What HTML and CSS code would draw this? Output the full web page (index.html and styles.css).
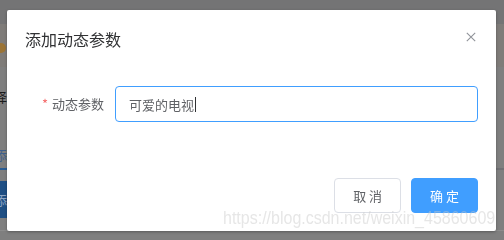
FILE: index.html
```html
<!DOCTYPE html>
<html lang="zh-CN">
<head>
<meta charset="utf-8">
<title>添加动态参数</title>
<link rel="stylesheet" href="styles.css">
</head>
<body>
<div class="page">
  <div class="topbar"></div>
  <div class="band"><span class="dot"></span></div>
  <div class="gap g1"></div>
  <div class="cut-text dark">择</div>
  <div class="gap g2"></div>
  <div class="cut-text blue">添</div>
  <div class="gap g3"></div>
  <div class="rule"><span class="rule-active"></span></div>
  <div class="gap g4"></div>
  <div class="under-btn"><span>添</span></div>
  <div class="gap g5"></div>
  <div class="rule light"></div>
</div>

<div class="mask">
  <div class="dialog">
    <div class="dialog-header">
      <span class="dialog-title">添加动态参数</span>
      <button class="dialog-close" aria-label="Close">
        <svg width="10" height="10" viewBox="0 0 10 10"><path d="M0.8 0.8 L9.2 9.2 M9.2 0.8 L0.8 9.2" stroke="#909399" stroke-width="1.1" fill="none"/></svg>
      </button>
    </div>
    <div class="dialog-body">
      <div class="form-item">
        <label class="form-label"><span class="req">*</span>动态参数</label>
        <div class="form-content">
          <div class="input is-focus"><span class="input-text">可爱的电视</span><span class="caret"></span></div>
        </div>
      </div>
    </div>
    <div class="dialog-footer">
      <button class="btn">取 消</button>
      <button class="btn btn-primary">确 定</button>
    </div>
  </div>
</div>

<div class="watermark">https://blog.csdn.net/weixin_45860609</div>
</body>
</html>
```

FILE: styles.css
```css
html, body {
  margin: 0;
  padding: 0;
}
body {
  width: 504px;
  height: 236px;
  overflow: hidden;
  background: #7f7f7f;
  font-family: "Noto Sans CJK SC", "Noto Sans", sans-serif;
}

/* dimmed page beneath the modal */
.page {
  width: 504px;
  height: 236px;
  display: flex;
  flex-direction: column;
  background: #7f7f7f;
}
.topbar { height: 24px; background: #747475; flex: none; }
.band {
  height: 43px;
  flex: none;
  background: #7f7c79;
  display: flex;
  align-items: flex-start;
}
.dot {
  width: 10px;
  height: 10px;
  margin-top: 19px;
  margin-left: -4px;
  border-radius: 50%;
  background: #9b7436;
}
.gap { flex: none; }
.g1 { height: 21px; }
.g2 { height: 40px; }
.g3 { height: 4px; }
.g4 { height: 11px; }
.g5 { height: 12px; }
.cut-text {
  height: 18px;
  flex: none;
  font-size: 13px;
  line-height: 18px;
  margin-left: -6px;
}
.cut-text.dark { color: #1c1c1c; }
.cut-text.blue { color: #3e5f8c; }
.rule {
  height: 2px;
  flex: none;
  background: #707074;
  display: flex;
}
.rule-active { width: 40px; background: #2a5d94; }
.rule.light { height: 1px; background: #8c8c8c; }
.under-btn {
  height: 37px;
  width: 40px;
  flex: none;
  background: #1f4f84;
  color: #8ea6c4;
  font-size: 13px;
  line-height: 37px;
}
.under-btn span { margin-left: -6px; }

/* modal */
.mask {
  position: fixed;
  inset: 0;
  padding: 10px 0 0 7px;
}
.dialog {
  position: relative;
  width: 489px;
  background: #fff;
  border-radius: 2px;
  box-shadow: 0 1px 3px rgba(0, 0, 0, 0.3);
}
.dialog-header {
  padding: 18px 18px 9px;
}
.dialog-title {
  display: block;
  font-size: 16px;
  line-height: 22px;
  color: #303133;
}
.dialog-close {
  position: absolute;
  top: 22px;
  right: 20px;
  width: 10px;
  height: 10px;
  padding: 0;
  border: 0;
  background: none;
  display: flex;
}
.dialog-body {
  padding: 27px 18px;
}
.form-item {
  display: flex;
  margin-bottom: 20px;
}
.form-label {
  width: 90px;
  padding-right: 11px;
  box-sizing: border-box;
  text-align: right;
  font-size: 13px;
  line-height: 36px;
  color: #606266;
  flex: none;
}
.req {
  color: #f56c6c;
  margin-right: 4px;
}
.form-content { flex: 1; }
.input {
  height: 36px;
  box-sizing: border-box;
  border: 1px solid #409eff;
  border-radius: 4px;
  padding: 0 13px;
  display: flex;
  align-items: center;
  font-size: 13px;
  color: #606266;
}
.caret {
  width: 1px;
  height: 15px;
  background: #303133;
  margin-left: 1px;
}
.dialog-footer {
  padding: 9px 18px 18px;
  display: flex;
  justify-content: flex-end;
  gap: 10px;
}
.btn {
  height: 35px;
  padding: 0 18px;
  border: 1px solid #dcdfe6;
  border-radius: 4px;
  background: #fff;
  color: #606266;
  font-family: "Noto Sans CJK SC", "Noto Sans", sans-serif;
  font-size: 13px;
  line-height: 1;
}
.btn-primary {
  background: #409eff;
  border-color: #409eff;
  color: #fff;
}

.watermark {
  position: fixed;
  left: 223px;
  top: 207px;
  font-family: "Liberation Sans", Arial, sans-serif;
  font-size: 16px;
  line-height: 20px;
  color: rgba(200, 200, 200, 0.45);
  white-space: nowrap;
  transform: scaleY(1.12);
  transform-origin: left top;
}
```
